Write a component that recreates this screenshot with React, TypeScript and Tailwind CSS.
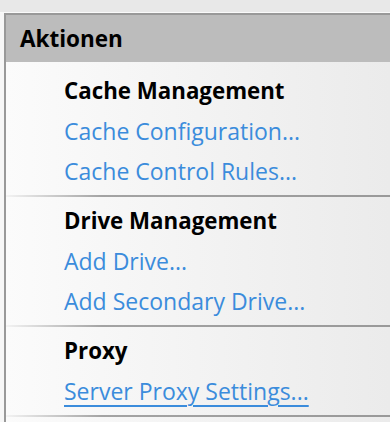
import React from "react";

type Section = {
  title: string;
  links: string[];
};

const SECTIONS: Section[] = [
  {
    title: "Cache Management",
    links: ["Cache Configuration...", "Cache Control Rules..."],
  },
  {
    title: "Drive Management",
    links: ["Add Drive...", "Add Secondary Drive..."],
  },
  {
    title: "Proxy",
    links: ["Server Proxy Settings..."],
  },
];

const FONT = { fontFamily: '"Open Sans", "Noto Sans", "Liberation Sans", sans-serif' };

function Separator() {
  return (
    <div className="h-[2px] bg-linear-to-r from-[#f3f3f3] via-[#a3a3a3] via-25% to-[#999999]" />
  );
}

export default function App() {
  return (
    <div className="h-[422px] w-[390px] overflow-hidden bg-[#f7f7f7]" style={FONT}>
      <div className="h-[12px] bg-[#e8e8e8]" />
      <div className="h-[1px] bg-[#fafafa]" />
      <div className="pl-[4px]">
        <div className="border-l-2 border-t-2 border-[#999999]">
          <div className="flex h-[47px] items-center bg-[#bcbcbc] pl-[14px] text-[22.5px] font-bold text-black">
            Aktionen
          </div>
          <div className="bg-linear-to-r from-[#fbfbfb] to-[#ebebeb]">
            {SECTIONS.map((section, i) => (
              <div key={section.title}>
                <div className={`${i === 0 ? "pt-[9px]" : "pt-[4px]"} pb-[4px] pl-[58px]`}>
                  <div className="h-[40px] text-[22.3px] leading-[40px] font-bold text-black">
                    {section.title}
                  </div>
                  {section.links.map((link) => (
                    <div key={link} className="h-[40px] text-[23px] leading-[40px]">
                      <a
                        href="#"
                        className={
                          link === "Server Proxy Settings..."
                            ? "text-[#3b8cdc] underline decoration-2 underline-offset-[5px]"
                            : "text-[#3b8cdc]"
                        }
                      >
                        {link}
                      </a>
                    </div>
                  ))}
                </div>
                <Separator />
              </div>
            ))}
            <div className="h-[20px]" />
          </div>
        </div>
      </div>
    </div>
  );
}
